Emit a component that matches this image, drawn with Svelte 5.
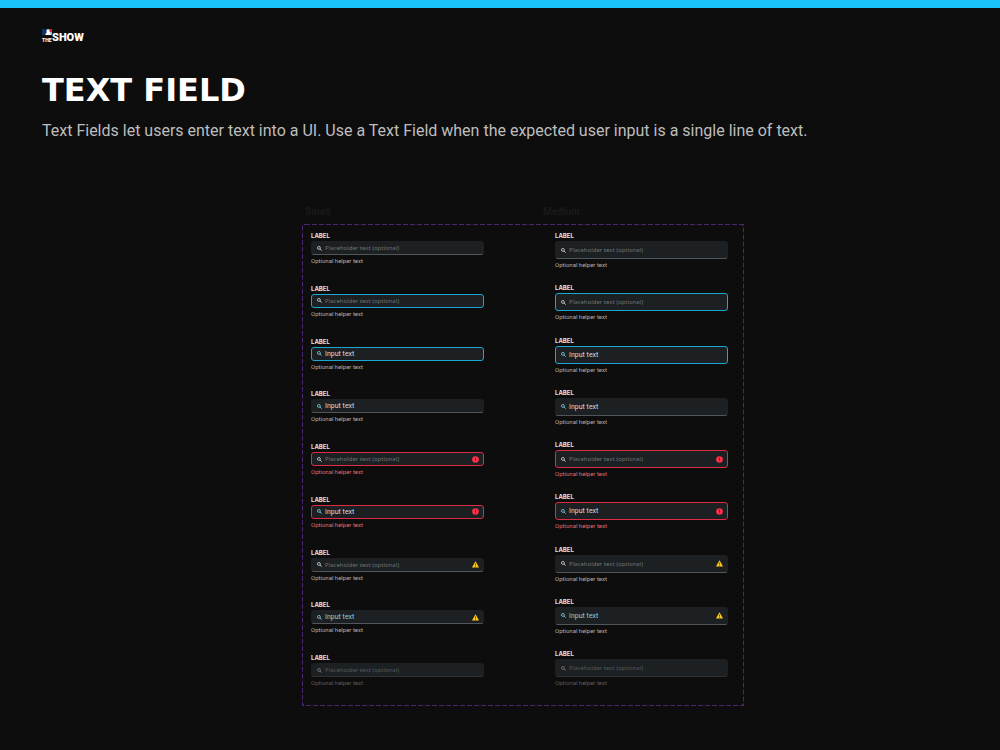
<script lang="ts">
  type FieldState = {
    name: string;
    value?: string;
    focused?: boolean;
    status?: "error" | "warning";
    disabled?: boolean;
  };

  const states: FieldState[] = [
    { name: "default" },
    { name: "focus", focused: true },
    { name: "focus-filled", focused: true, value: "Input text" },
    { name: "filled", value: "Input text" },
    { name: "error", status: "error" },
    { name: "error-filled", status: "error", value: "Input text" },
    { name: "warning", status: "warning" },
    { name: "warning-filled", status: "warning", value: "Input text" },
    { name: "disabled", disabled: true },
  ];

  const sizes = ["small", "medium"];
</script>

<div class="page">
  <header>
    <svg class="logo" viewBox="0 0 42 15" role="img" aria-label="MLB The Show">
      <rect x="0" y="1" width="10" height="6" rx="1" fill="#aab2bd" />
      <path d="M0 1h5L4 4l1 3H0z" fill="#12305f" />
      <path d="M7 1h3v3H8z" fill="#d2263a" />
      <path d="M5 2h2l1 3 1 2H4l-1-1 2-1z" fill="#fff" />
      <text class="the" x="0" y="14">THE</text>
      <text class="show" x="10" y="13">SHOW</text>
    </svg>
    <h1>TEXT FIELD</h1>
    <p>Text Fields let users enter text into a UI. Use a Text Field when the expected user input is a single line of text.</p>
  </header>

  <main>
    <div class="captions">
      <h2>Small</h2>
      <h2>Medium</h2>
    </div>

    <section class="board">
      <svg class="outline" aria-hidden="true">
        <rect width="100%" height="100%" rx="3" />
      </svg>

      {#each sizes as size}
        <div class="column {size}">
          {#each states as s (s.name)}
            {@const id = `${size}-${s.name}`}
            <div
              class="field {s.status ?? ''}"
              class:focused={s.focused}
              class:filled={s.value}
              class:disabled={s.disabled}
            >
              <label for={id}>LABEL</label>
              <div class="box">
                <svg class="search" viewBox="0 0 10 10" aria-hidden="true">
                  <circle cx="3.8" cy="3.8" r="2.9" />
                  <path d="M6 6l3.4 3.4" />
                </svg>
                <input
                  {id}
                  type="text"
                  value={s.value ?? ""}
                  placeholder="Placeholder text (optional)"
                  disabled={s.disabled}
                  aria-invalid={s.status === "error"}
                  aria-describedby="{id}-help"
                />
                {#if s.status === "error"}
                  <svg class="status" viewBox="0 0 14 14" aria-hidden="true">
                    <circle cx="7" cy="7" r="6.6" fill="#ff3049" />
                    <path d="M6.2 3.4h1.6v4.4H6.2zM6.2 9h1.6v1.6H6.2z" fill="#1c2023" />
                  </svg>
                {:else if s.status === "warning"}
                  <svg class="status" viewBox="0 0 14 14" aria-hidden="true">
                    <path d="M7 0.4L14 13H0z" fill="#fdc71b" />
                    <path d="M6.3 5h1.4v4H6.3zM6.3 10h1.4v1.5H6.3z" fill="#1c2023" />
                  </svg>
                {/if}
              </div>
              <span class="help" id="{id}-help">Optional helper text</span>
            </div>
          {/each}
        </div>
      {/each}
    </section>
  </main>
</div>

<style>
  :global(body) {
    margin: 0;
    background: #0d0d0d;
  }

  .page {
    box-sizing: border-box;
    min-height: 100vh;
    padding: 20px 42px 44px;
    border-top: 8px solid #19c3fb;
    background: #0d0d0d;
    font-family: Roboto, "Liberation Sans", sans-serif;
  }

  .logo {
    display: block;
    width: 42px;
    height: 15px;
    overflow: visible;
    fill: #fff;
    font-weight: 900;
  }

  .the {
    font-size: 5px;
  }

  .show {
    font-size: 11px;
  }

  h1 {
    margin: 28px 0 0;
    color: #fff;
    font: 700 32px/38px "DejaVu Sans", sans-serif;
  }

  p {
    margin: 10px 0 0;
    color: #bdbdbd;
    font-size: 16px;
    line-height: 24px;
  }

  main {
    max-width: 442px;
    margin: 63px auto 0;
    padding-left: 46px;
  }

  .captions {
    display: grid;
    grid-template-columns: 238px 1fr;
    padding-left: 3px;
    margin-bottom: 6px;
  }

  h2 {
    margin: 0;
    color: #1a1a1a;
    font-size: 10px;
    line-height: 12px;
  }

  .board {
    position: relative;
    box-sizing: border-box;
    display: grid;
    grid-template-columns: 1fr 1fr;
    gap: 71px;
    min-height: 482px;
    padding: 7px 16px 18px 9px;
  }

  /* the svg clips the outer half of the stroke, leaving a crisp 1px line */
  .outline {
    position: absolute;
    inset: 0;
    width: 100%;
    height: 100%;
    overflow: hidden;
    pointer-events: none;
  }

  .outline rect {
    fill: none;
    stroke: #4b2671;
    stroke-width: 2;
    stroke-dasharray: 5 2;
  }

  .column {
    display: flex;
    flex-direction: column;
    justify-content: space-between;
  }

  .field {
    display: flex;
    flex-direction: column;
  }

  label {
    color: #e2e2e2;
    font: 700 6px/10px Inter, sans-serif;
  }

  .box {
    box-sizing: border-box;
    display: flex;
    align-items: center;
    height: 14px;
    padding: 0 4px 0 5px;
    border: 1px solid #1c2023;
    border-bottom-color: #51565a;
    border-radius: 3px;
    background: #1c2023;
  }

  .medium .box {
    height: 18px;
  }

  .focused .box {
    border-color: #1ba8d0;
  }

  .error .box {
    border-color: #e02c42;
  }

  .disabled .box {
    border-bottom-color: #2e3235;
  }

  .search {
    width: 5px;
    height: 5px;
    margin-right: 3px;
    fill: none;
    stroke: #b4b8ba;
    stroke-width: 2;
  }

  .filled .search {
    stroke: #6fb3c2;
  }

  .disabled .search {
    stroke: #686c6e;
  }

  input {
    flex: 1;
    min-width: 0;
    padding: 0;
    border: 0;
    outline: 0;
    background: none;
    color: #d6dcde;
    font: 400 7px/10px Roboto, sans-serif;
  }

  input::placeholder {
    color: #6f7375;
    font-family: "Noto Sans", sans-serif;
    font-size: 6px;
    opacity: 1;
  }

  .warning input {
    color: #86d0de;
  }

  .disabled input::placeholder {
    color: #55595b;
  }

  .status {
    width: 7px;
    height: 7px;
  }

  .help {
    margin-top: 1px;
    color: #b0b0b0;
    font-size: 6px;
    line-height: 10px;
  }

  .error .help {
    color: #d8707a;
  }

  .disabled .help {
    color: #5c5c5c;
  }
</style>
